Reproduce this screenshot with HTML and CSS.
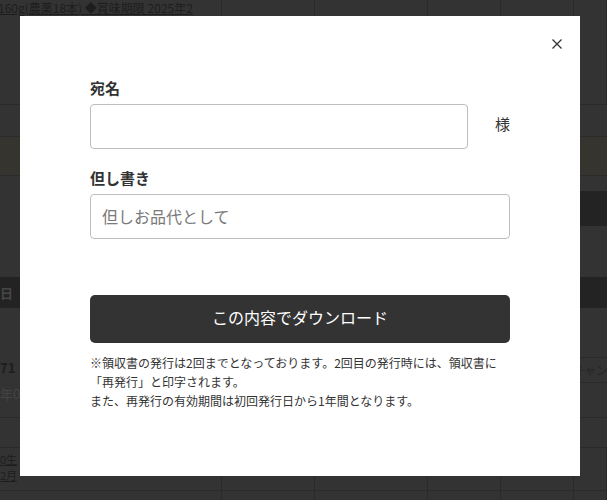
FILE: index.html
```html
<!DOCTYPE html>
<html lang="ja">
<head>
<meta charset="utf-8">
<title>領収書発行</title>
<link rel="stylesheet" href="styles.css">
</head>
<body>
<div class="page">
  <div class="row r1 cols">
    <div class="cell"><a class="ulink top-link">160g(農薬18本) ◆賞味期限 2025年2</a></div>
    <div class="cell"></div><div class="cell"></div><div class="cell"></div><div class="cell"></div><div class="cell"></div>
  </div>
  <div class="row r2"></div>
  <div class="row r3"></div>
  <div class="row r4"></div>
  <div class="row r5"><span class="sortbtn">▼ きりかえ</span></div>
  <div class="row r6"></div>
  <div class="row r7"><span class="th">日</span></div>
  <div class="row r8">
    <div class="r8-left"><b class="num">71</b><span class="sub">年0</span></div>
    <div class="r8-right"><span class="cancel">キャンセル</span></div>
  </div>
  <div class="row r9"></div>
  <div class="row r10 cols">
    <div class="cell"><a class="ulink">0生</a><a class="ulink">2月</a></div>
    <div class="cell"></div><div class="cell"></div><div class="cell"></div><div class="cell"></div><div class="cell"></div>
  </div>
  <div class="row r11 cols">
    <div class="cell"></div><div class="cell"></div><div class="cell"></div><div class="cell"></div><div class="cell"></div><div class="cell"></div>
  </div>
</div>

<div class="modal">
  <button class="close" type="button" aria-label="閉じる">
    <svg width="10" height="10" viewBox="0 0 10 10"><path d="M0.5 0.5 L9.5 9.5 M9.5 0.5 L0.5 9.5" stroke="#333" stroke-width="1.3" fill="none"/></svg>
  </button>
  <label class="label">宛名</label>
  <div class="name-row">
    <input class="field" type="text">
    <span class="sama">様</span>
  </div>
  <label class="label label2">但し書き</label>
  <input class="field field-full" type="text" placeholder="但しお品代として">
  <button class="download" type="button">この内容でダウンロード</button>
  <p class="note">※領収書の発行は2回までとなっております。2回目の発行時には、領収書に「再発行」と印字されます。<br>また、再発行の有効期間は初回発行日から1年間となります。</p>
</div>
</body>
</html>
```

FILE: styles.css
```css
html, body {
  margin: 0;
  padding: 0;
  width: 607px;
  height: 500px;
  overflow: hidden;
  background: #333333;
  font-family: "Noto Sans CJK JP", "Noto Sans", sans-serif;
}

.page {
  width: 607px;
}

.row {
  box-sizing: border-box;
  width: 607px;
  border-bottom: 1px solid #2a2a2a;
}

.cols {
  display: grid;
  grid-template-columns: 222px 93px 113px 73px 73px 33px;
}

.cols .cell {
  border-right: 1px solid #2a2a2a;
  box-sizing: border-box;
  overflow: hidden;
}

.ulink {
  display: block;
  color: #1e1e1e;
  text-decoration: underline;
  font-size: 12px;
  line-height: 14px;
  white-space: nowrap;
}

.top-link {
  margin-left: -2px;
  padding-top: 1px;
}

.r1 { height: 105px; }
.r2 { height: 32px; }
.r3 { height: 39px; background: #35342f; }
.r4 { height: 15px; border-bottom: none; }
.r5 {
  height: 35px;
  border-bottom: none;
  display: flex;
  justify-content: flex-end;
}
.sortbtn {
  display: block;
  width: 90px;
  padding-left: 62px;
  background: #232323;
  color: #474747;
  font-size: 12px;
  line-height: 35px;
  white-space: nowrap;
  overflow: hidden;
}
.r6 { height: 51px; border-bottom: none; }
.r7 {
  height: 31px;
  background: #232323;
  border-bottom: none;
}
.th {
  display: block;
  color: #474747;
  font-size: 13px;
  font-weight: 700;
  line-height: 31px;
}
.r8 {
  height: 110px;
  display: grid;
  grid-template-columns: 565px 42px;
}
.r8-left {
  padding-top: 52px;
  display: flex;
  flex-direction: column;
  font-size: 13px;
  line-height: 16px;
}
.num { color: #1e1e1e; }
.sub { color: #444; margin-top: 10px; }
.r8-right {
  padding-top: 49px;
}
.cancel {
  display: block;
  box-sizing: border-box;
  height: 26px;
  width: 80px;
  padding-left: 6px;
  border: 1px solid #2a2a2a;
  color: #242424;
  font-size: 12px;
  line-height: 24px;
  white-space: nowrap;
}
.r9 { height: 30px; }
.r10 { height: 43px; }
.r10 .cell:first-child { padding-top: 3px; }
.r10 .ulink { font-size: 11px; line-height: 16px; }
.r11 { height: 20px; border-bottom: none; }

/* modal */
.modal {
  position: absolute;
  left: 20px;
  top: 16px;
  width: 560px;
  height: 460px;
  box-sizing: border-box;
  padding: 62px 70px 0;
  background: #ffffff;
  color: #333333;
}

.close {
  position: absolute;
  top: 22px;
  right: 17px;
  width: 12px;
  height: 12px;
  padding: 1px;
  border: none;
  background: none;
  display: flex;
  align-items: center;
  justify-content: center;
}

.label {
  display: block;
  font-size: 15px;
  font-weight: 700;
  line-height: 20px;
  margin-bottom: 6px;
  color: #333333;
}

.label2 {
  margin-top: 19px;
}

.name-row {
  display: flex;
  align-items: center;
}

.field {
  box-sizing: border-box;
  height: 45px;
  border: 1px solid #bdbdbd;
  border-radius: 4px;
  padding: 0 11px 2px;
  font-family: "Noto Sans CJK JP", "Noto Sans", sans-serif;
  font-size: 16px;
  color: #333;
  background: #fff;
  outline: none;
}

.name-row .field {
  flex: 1;
  min-width: 0;
}

.field-full {
  display: block;
  width: 100%;
}

.field::placeholder {
  color: #7a7a7a;
}

.sama {
  margin-left: 27px;
  padding-bottom: 6px;
  font-size: 15px;
  line-height: 20px;
  color: #333;
}

.download {
  display: block;
  width: 100%;
  height: 48px;
  margin-top: 56px;
  padding: 0 0 4px;
  border: none;
  border-radius: 5px;
  background: #333333;
  color: #ffffff;
  font-family: "Noto Sans CJK JP", "Noto Sans", sans-serif;
  font-size: 16px;
}

.note {
  margin: 10px 0 0;
  font-size: 12px;
  line-height: 19px;
  color: #333333;
}
```
